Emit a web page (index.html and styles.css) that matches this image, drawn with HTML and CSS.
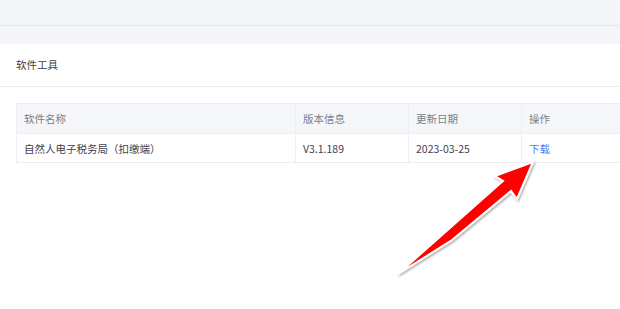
FILE: index.html
```html
<!DOCTYPE html>
<html lang="zh-CN">
<head>
    <meta charset="UTF-8">
    <title>软件工具</title>
    <link rel="stylesheet" href="styles.css">
</head>
<body>
    <div class="topbar"></div>
    <div class="spacer"></div>
    <div class="panel">
        <div class="panel__title">软件工具</div>
        <div class="panel__body">
            <table class="grid">
                <colgroup>
                    <col class="c1"><col class="c2"><col class="c3"><col class="c4">
                </colgroup>
                <thead>
                    <tr>
                        <th>软件名称</th>
                        <th>版本信息</th>
                        <th>更新日期</th>
                        <th>操作</th>
                    </tr>
                </thead>
                <tbody>
                    <tr>
                        <td>自然人电子税务局（扣缴端）</td>
                        <td>V3.1.189</td>
                        <td>2023-03-25</td>
                        <td><a class="link" href="#">下载</a></td>
                    </tr>
                </tbody>
            </table>
        </div>
    </div>
    <!-- red pointer drawn over the page -->
    <svg class="arrow" width="620" height="309" viewBox="0 0 620 309">
        <defs>
            <filter id="shadow" x="-20%" y="-20%" width="140%" height="140%">
                <feDropShadow dx="1" dy="1.5" stdDeviation="1.2" flood-color="#000" flood-opacity="0.35"/>
            </filter>
        </defs>
        <polygon points="533,162 495,176 503,181 398,274 452,240 511,191 517,199"
                 fill="#ff0000" stroke="#fff" stroke-width="2" stroke-linejoin="miter"
                 filter="url(#shadow)"/>
    </svg>
</body>
</html>
```

FILE: styles.css
```css
html, body {
    margin: 0;
    padding: 0;
}
body {
    width: 620px;
    height: 309px;
    overflow: hidden;
    position: relative;
    background: #fff;
    font-family: "Noto Sans CJK SC", "Noto Sans", sans-serif;
    font-size: 10.5px;
    color: #4a4d55;
}
.topbar {
    height: 25px;
    background: #f4f5f9;
    border-bottom: 1px solid #e4e6ec;
}
.spacer {
    height: 18px;
    background: #f4f5f9;
}
.panel {
    background: #fff;
}
.panel__title {
    height: 42px;
    line-height: 42px;
    padding-left: 16px;
    color: #3c3f46;
    border-bottom: 1px solid #e8eaef;
}
.panel__body {
    padding: 16px 0 0 16px;
}
.grid {
    border-collapse: collapse;
    table-layout: fixed;
    width: 620px;
}
.c1 { width: 279px; }
.c2 { width: 113px; }
.c3 { width: 113px; }
.c4 { width: 115px; }
.grid th,
.grid td {
    text-align: left;
    padding: 0 0 0 7px;
    border: 1px solid #ebeef3;
    white-space: nowrap;
}
.grid th {
    height: 29px;
    background: #f5f6fa;
    font-weight: normal;
    color: #7b7f88;
}
.grid td {
    height: 28px;
    color: #3f424a;
}
.link {
    color: #3f86f0;
    text-decoration: none;
}
.arrow {
    position: absolute;
    left: 0;
    top: 0;
    pointer-events: none;
}
```
